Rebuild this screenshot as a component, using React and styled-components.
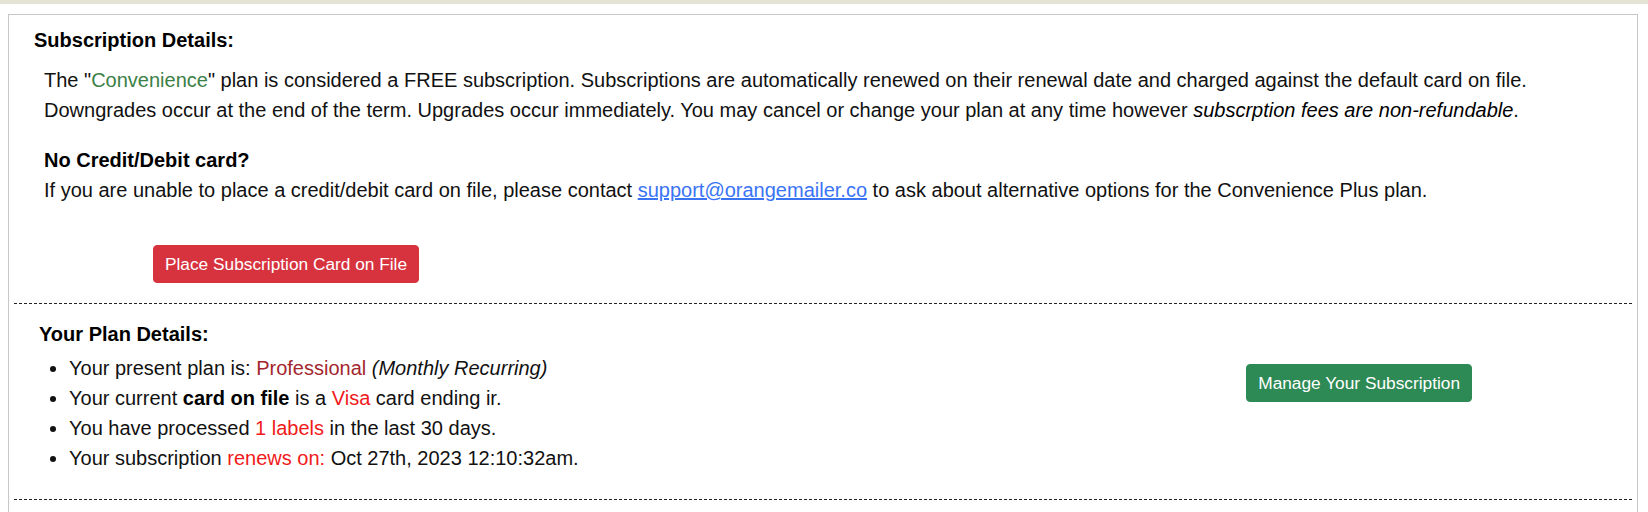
import styled, { createGlobalStyle } from "styled-components"

const GlobalStyle = createGlobalStyle`
    body {
        margin: 0;
        background: #FFFFFF;
        font-family: 'Liberation Sans', Arial, sans-serif;
        color: #111111;
    }
`

export default function App() {

    return (
        <>
            <GlobalStyle />
            <TopBand />

            <Panel>
                <Section>
                    <Heading indent={25}>Subscription Details:</Heading>

                    <Copy>
                        The "<Plan>Convenience</Plan>" plan is considered a FREE subscription. Subscriptions are automatically renewed on their renewal date and charged against the default card on file.
                        <br />
                        Downgrades occur at the end of the term. Upgrades occur immediately. You may cancel or change your plan at any time however <em>subscrption fees are non-refundable</em>.
                    </Copy>

                    <NoCard>
                        <strong>No Credit/Debit card?</strong>
                        <br />
                        If you are unable to place a credit/debit card on file, please contact <Mail href="#">support@orangemailer.co</Mail> to ask about alternative options for the Convenience Plus plan.
                    </NoCard>

                    <ButtonRow>
                        <Button tone="#D7333F">Place Subscription Card on File</Button>
                    </ButtonRow>
                </Section>

                <Divider />

                <PlanSection>
                    <PlanInfo>
                        <Heading indent={30}>Your Plan Details:</Heading>

                        <Details>
                            <li>Your present plan is: <Tier>Professional</Tier> <em>(Monthly Recurring)</em></li>
                            <li>Your current <strong>card on file</strong> is a <Hot>Visa</Hot> card ending ir.</li>
                            <li>You have processed <Hot>1 labels</Hot> in the last 30 days.</li>
                            <li>Your subscription <Hot>renews on:</Hot> Oct 27th, 2023 12:10:32am.</li>
                        </Details>
                    </PlanInfo>

                    <PlanActions>
                        <Button tone="#2E8A55">Manage Your Subscription</Button>
                    </PlanActions>
                </PlanSection>

                <Divider />
            </Panel>
        </>
    )
}

const TopBand = styled.div`
    height: 4px;
    background: #E4E4D6;
`

const Panel = styled.div`
    margin: 10px 10px 0 8px;
    min-height: 520px;
    border: 1px solid #C8C8C8;
    border-bottom: none;
    font-size: 20px;
    line-height: 30px;
`

const Section = styled.div`
    padding-top: 10px;
`

const Heading = styled.div`
    padding-left: ${props => props.indent}px;
    font-size: 20px;
    font-weight: bold;
    color: #000000;
`

const Copy = styled.p`
    margin: 10px 0 0;
    padding-left: 35px;

    em {
        font-style: italic;
        color: #000000;
    }
`

const NoCard = styled.p`
    margin: 20px 0 0;
    padding-left: 35px;

    strong {
        color: #000000;
    }
`

const Plan = styled.span`
    color: #3B8046;
`

const Mail = styled.a`
    color: #3A74F5;
    text-decoration: underline;
`

const ButtonRow = styled.div`
    margin-top: 40px;
    padding-left: 144px;
    display: flex;
`

const Button = styled.button`
    font-family: 'Liberation Sans', Arial, sans-serif;
    font-size: 17.3px;
    line-height: 28px;
    padding: 4px 11px;
    border: 1px solid ${props => props.tone};
    border-radius: 4px;
    background: ${props => props.tone};
    color: #FFFFFF;
    cursor: pointer;
`

const Divider = styled.div`
    margin: 20px 5px 0;
    border-top: 1px dashed #222222;
`

const PlanSection = styled.div`
    display: flex;
    justify-content: space-between;
    align-items: flex-start;
    padding-top: 15px;

    & + ${Divider} {
        margin-top: 26px;
    }
`

const PlanInfo = styled.div`
    display: flex;
    flex-direction: column;
`

const Details = styled.ul`
    margin: 4px 0 0 20px;
    padding-left: 40px;

    strong {
        color: #000000;
    }
`

const Tier = styled.span`
    color: #A3262E;
`

const Hot = styled.span`
    color: #F01A1A;
`

const PlanActions = styled.div`
    padding-top: 45px;
    padding-right: 165px;
`
